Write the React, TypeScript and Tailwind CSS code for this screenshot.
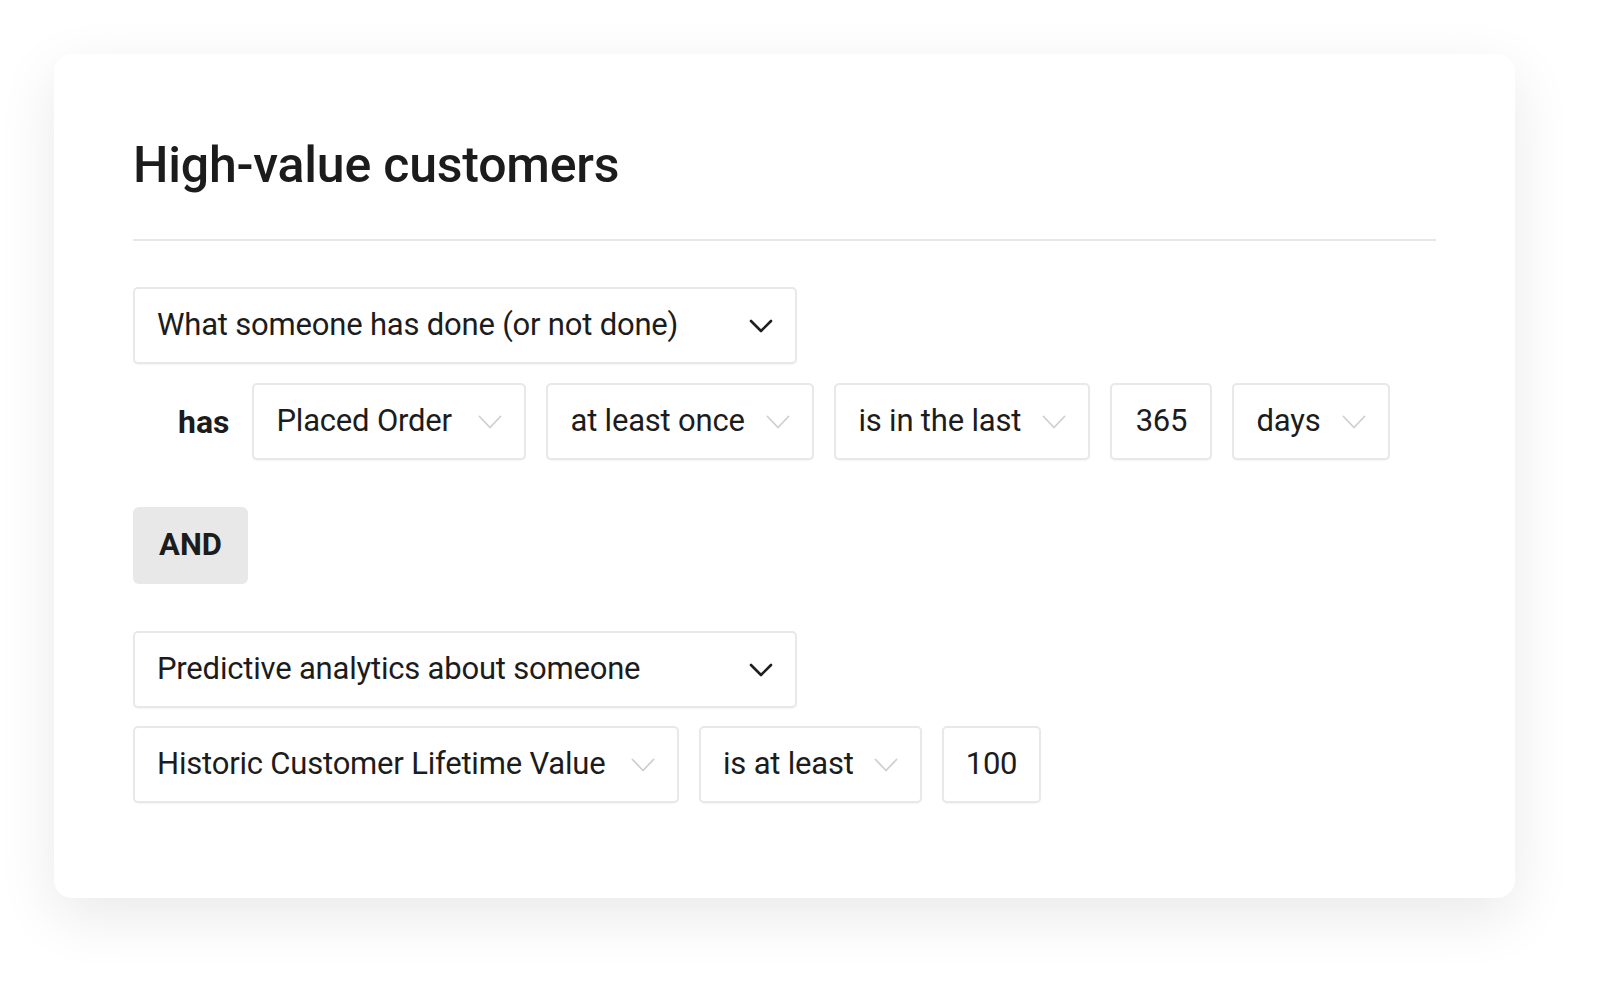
import React from "react";

const font = { fontFamily: 'Roboto, "Liberation Sans", Arial, sans-serif' };

function Chevron({ dark }: { dark?: boolean }) {
  if (dark) {
    return (
      <svg width="24" height="14" viewBox="0 0 24 14" fill="none">
        <polyline points="2,2 12,12 22,2" stroke="#1f1f1f" strokeWidth="2.6" strokeLinecap="round" strokeLinejoin="round" />
      </svg>
    );
  }
  return (
    <svg width="24" height="14" viewBox="0 0 24 14" fill="none">
      <polyline points="1.5,1.5 12,12.5 22.5,1.5" stroke="#cfcfcf" strokeWidth="1.8" strokeLinecap="round" strokeLinejoin="round" />
    </svg>
  );
}

function Box({ children, w, chevron, dark, center }: { children: React.ReactNode; w: string; chevron?: boolean; dark?: boolean; center?: boolean }) {
  return (
    <div
      className={`${w} h-[77px] shrink-0 flex items-center rounded-[5px] border-2 border-[#e8e8e8] bg-white shadow-[0_1px_1px_rgba(0,0,0,0.04)] ${center ? "justify-center" : "justify-between pl-[22px] pr-[22px]"}`}
    >
      <span className="text-[31px] text-[#1c1c1c] tracking-[-0.2px]">{children}</span>
      {chevron && <Chevron dark={dark} />}
    </div>
  );
}

export default function App() {
  return (
    <div className="min-h-screen w-full bg-white pt-[54px] pl-[54px]" style={font}>
      <div className="w-[1461px] h-[844px] rounded-[18px] bg-white shadow-[0_18px_60px_rgba(0,0,0,0.09)] px-[79px] pt-[86px]">
        <h1 className="text-[50px] leading-none font-medium text-[#1c1c1c] tracking-[-0.2px]">High-value customers</h1>
        <div className="mt-[49px] h-[2px] bg-[#e7e7e7]" />
        <div className="mt-[46px] flex flex-col">
          <Box w="w-[664px]" chevron dark>What someone has done (or not done)</Box>
          <div className="mt-[19px] flex items-center gap-[20px]">
            <span className="ml-[45px] mr-[3px] text-[32px] font-bold text-[#1c1c1c]">has</span>
            <Box w="w-[274px]" chevron>Placed Order</Box>
            <Box w="w-[268px]" chevron>at least once</Box>
            <Box w="w-[256px]" chevron>is in the last</Box>
            <Box w="w-[102px]" center>365</Box>
            <Box w="w-[158px]" chevron>days</Box>
          </div>
          <div className="mt-[47px] w-[115px] h-[77px] rounded-[6px] bg-[#e8e8e8] flex items-center justify-center">
            <span className="text-[31px] font-bold text-[#1c1c1c]">AND</span>
          </div>
          <div className="mt-[47px]">
            <Box w="w-[664px]" chevron dark>Predictive analytics about someone</Box>
          </div>
          <div className="mt-[18px] flex items-center gap-[20px]">
            <Box w="w-[546px]" chevron>Historic Customer Lifetime Value</Box>
            <Box w="w-[223px]" chevron>is at least</Box>
            <Box w="w-[99px]" center>100</Box>
          </div>
        </div>
      </div>
    </div>
  );
}
